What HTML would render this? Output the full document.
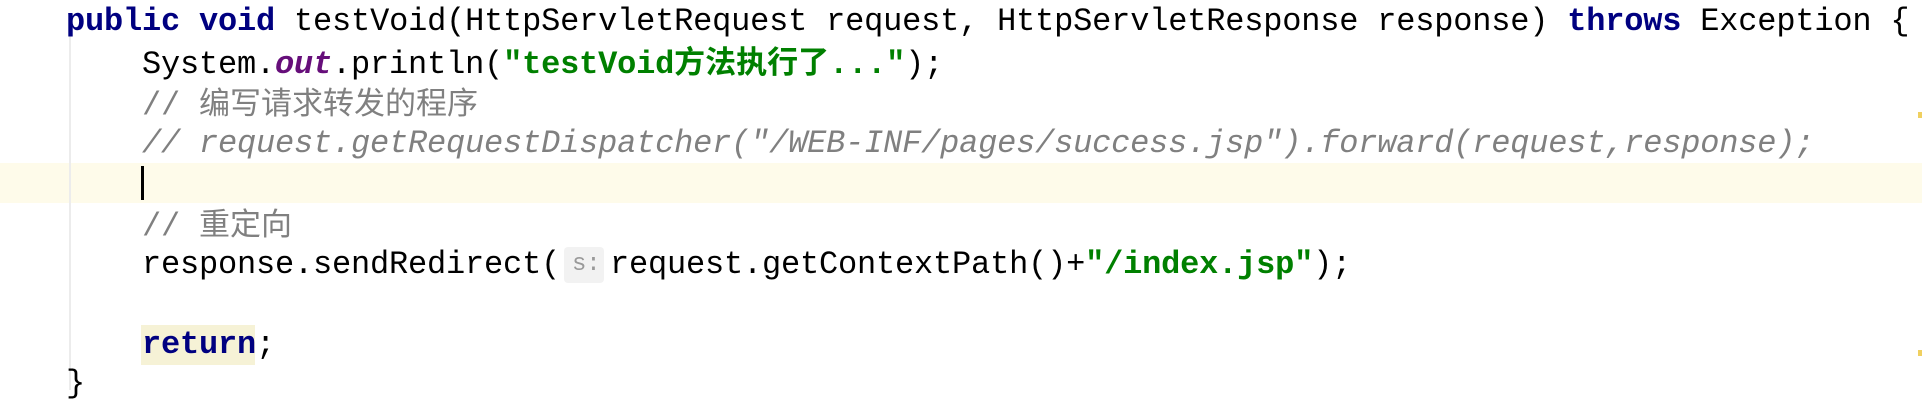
<!DOCTYPE html>
<html><head><meta charset="utf-8"><style>
html,body{margin:0;padding:0;}
body{width:1922px;height:412px;background:#fff;position:relative;overflow:hidden;
font-family:"Liberation Mono","Noto Sans CJK SC",monospace;font-size:32px;letter-spacing:-0.2px;color:#000;}
.l{position:absolute;left:0;height:40px;line-height:40px;white-space:pre;}
.k{color:#000080;font-weight:bold;}
.s{color:#008000;font-weight:bold;}
.c{color:#808080;}
.ci{color:#808080;font-style:italic;}
.o{color:#660e7a;font-weight:bold;font-style:italic;}
.cj{font-family:"Noto Sans CJK SC",sans-serif;letter-spacing:0;font-size:31px;}
</style></head><body>
<div style="position:absolute;left:0;top:163px;width:1922px;height:40px;background:#fefbea"></div>
<div style="position:absolute;left:69px;top:34px;width:2px;height:356px;background:#ececec"></div>
<div style="position:absolute;left:141px;top:325px;width:114px;height:40px;background:#f6f2d6"></div>
<div style="position:absolute;left:564px;top:247px;width:40px;height:36px;background:#f2f2f2;border-radius:4px"></div>
<div style="position:absolute;left:141px;top:166px;width:3px;height:34px;background:#000"></div>
<div style="position:absolute;left:1918px;top:112px;width:4px;height:6px;background:#f0d060"></div>
<div style="position:absolute;left:1918px;top:350px;width:4px;height:6px;background:#f0d060"></div>
<div class="l" style="top:2px;left:66px"><span class="k">public void</span> testVoid(HttpServletRequest request, HttpServletResponse response) <span class="k">throws</span> Exception {</div>
<div class="l" style="top:40px;left:142px">System.<span class="o">out</span>.println(<span class="s">"testVoid<span class="cj">方法执行了</span>..."</span>);</div>
<div class="l c" style="top:81px;left:142px">// <span class="cj">编写请求转发的程序</span></div>
<div class="l ci" style="top:124px;left:142px">// request.getRequestDispatcher("/WEB-INF/pages/success.jsp").forward(request,response);</div>
<div class="l c" style="top:202px;left:142px">// <span class="cj">重定向</span></div>
<div class="l" style="top:245px;left:142px">response.sendRedirect(</div>
<div class="l" style="top:245px;left:572px;color:#999;font-size:24px">s:</div>
<div class="l" style="top:245px;left:610px">request.getContextPath()+<span class="s">"/index.jsp"</span>);</div>
<div class="l" style="top:325px;left:142px"><span class="k">return</span>;</div>
<div class="l" style="top:364px;left:66px">}</div>
</body></html>
